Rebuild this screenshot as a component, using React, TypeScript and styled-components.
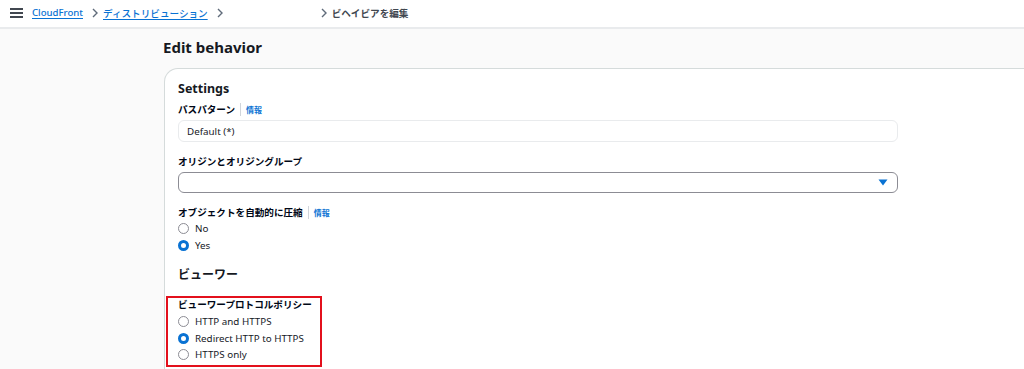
import React from 'react'
import styled, { createGlobalStyle } from 'styled-components'

const GlobalStyle = createGlobalStyle`
  body {
    margin: 0;
    background: #fafafa;
    font-family: 'Noto Sans', 'Noto Sans CJK JP', sans-serif;
    color: #16191f;
    overflow: hidden;
  }
`

const Chevron = () => (
  <ChevronIcon width='8' height='10' viewBox='0 0 8 10'>
    <path d='M2 1 L6 5 L2 9' fill='none' stroke='#5f6b7a' strokeWidth='1.4' />
  </ChevronIcon>
)

interface RadioProps {
  label: string
  checked?: boolean
}

const Radio = ({ label, checked }: RadioProps) => (
  <RadioRow>
    <RadioCircle checked={checked} />
    <RadioLabel>{label}</RadioLabel>
  </RadioRow>
)

const App = () => {
  return (
    <>
      <GlobalStyle />
      <TopBar>
        <Hamburger width='13' height='10' viewBox='0 0 13 10'>
          <path d='M0 1 H13 M0 5 H13 M0 9 H13' stroke='#414750' strokeWidth='1.8' />
        </Hamburger>
        <Crumbs>
          <CrumbLink>CloudFront</CrumbLink>
          <Chevron />
          <CrumbLink>ディストリビューション</CrumbLink>
          <Chevron />
          <CrumbGap />
          <Chevron />
          <CrumbCurrent>ビヘイビアを編集</CrumbCurrent>
        </Crumbs>
      </TopBar>
      <Main>
        <PageTitle>Edit behavior</PageTitle>
        <Card>
          <CardTitle>Settings</CardTitle>
          <Field>
            <LabelRow>
              <Label>パスパターン</Label>
              <Divider />
              <InfoLink>情報</InfoLink>
            </LabelRow>
            <TextBox>Default (*)</TextBox>
          </Field>
          <Field>
            <LabelRow>
              <Label>オリジンとオリジングループ</Label>
            </LabelRow>
            <SelectBox>
              <svg width='10' height='7' viewBox='0 0 10 7'>
                <path d='M0.5 0.5 H9.5 L5 6.5 Z' fill='#0972d3' />
              </svg>
            </SelectBox>
          </Field>
          <Field>
            <LabelRow>
              <Label>オブジェクトを自動的に圧縮</Label>
              <Divider />
              <InfoLink>情報</InfoLink>
            </LabelRow>
            <RadioGroup>
              <Radio label='No' />
              <Radio label='Yes' checked />
            </RadioGroup>
          </Field>
          <SubTitle>ビューワー</SubTitle>
          <Highlight>
            <LabelRow>
              <Label>ビューワープロトコルポリシー</Label>
            </LabelRow>
            <RadioGroup>
              <Radio label='HTTP and HTTPS' />
              <Radio label='Redirect HTTP to HTTPS' checked />
              <Radio label='HTTPS only' />
            </RadioGroup>
          </Highlight>
        </Card>
      </Main>
    </>
  )
}

const TopBar = styled.div`
  height: 29px;
  box-sizing: border-box;
  background: #ffffff;
  border-bottom: 2px solid #e9ebed;
  display: flex;
  align-items: center;
  padding-left: 10px;
`

const Hamburger = styled.svg`
  margin-right: 9px;
  margin-top: -2px;
`

const Crumbs = styled.div`
  display: flex;
  align-items: center;
  font-size: 9.6px;
  margin-top: -2px;
  white-space: nowrap;
`

const CrumbLink = styled.span`
  color: #0972d3;
  text-decoration: underline;
  text-underline-offset: 2px;
  font-weight: 500;
`

const CrumbGap = styled.span`
  width: 84px;
`

const CrumbCurrent = styled.span`
  color: #414750;
  font-weight: 700;
`

const ChevronIcon = styled.svg`
  margin: 0 4px 0 8px;
`

const Main = styled.div`
  padding-left: 164px;
`

const PageTitle = styled.h1`
  margin: 0 0 0 -1px;
  padding-top: 8px;
  height: 31px;
  font-size: 15px;
  font-weight: 700;
  line-height: 20px;
`

const Card = styled.div`
  background: #ffffff;
  border: 1px solid #d5dbdb;
  border-right: none;
  border-bottom: none;
  border-top-left-radius: 14px;
  padding: 10px 0 0 13px;
  height: 301px;
  box-sizing: border-box;
`

const CardTitle = styled.h2`
  margin: 0 0 2px 0;
  font-size: 12.5px;
  font-weight: 700;
  line-height: 20px;
`

const SubTitle = styled.h3`
  margin: 13px 0 12px 0;
  font-size: 12px;
  font-weight: 700;
  line-height: 18px;
`

const Field = styled.div`
  margin-bottom: 11px;
`

const LabelRow = styled.div`
  display: flex;
  align-items: center;
  height: 16px;
  margin-bottom: 3px;
  white-space: nowrap;
`

const Label = styled.span`
  font-size: 9.6px;
  font-weight: 700;
  color: #000716;
`

const Divider = styled.span`
  width: 1px;
  height: 13px;
  background: #d1d5db;
  margin: 0 5px 0 5px;
`

const InfoLink = styled.span`
  font-size: 8px;
  font-weight: 700;
  color: #0972d3;
`

const TextBox = styled.div`
  width: 720px;
  height: 22px;
  box-sizing: border-box;
  border: 1px solid #e9ebed;
  border-radius: 6px;
  padding: 0 8px;
  display: flex;
  align-items: center;
  font-size: 9.8px;
  color: #16191f;
`

const SelectBox = styled.div`
  width: 720px;
  height: 21px;
  box-sizing: border-box;
  border: 1px solid #8c8c94;
  border-radius: 6px;
  padding: 0 9px;
  display: flex;
  align-items: center;
  justify-content: flex-end;
`

const RadioGroup = styled.div`
  display: flex;
  flex-direction: column;
  margin-top: -3px;
`

const RadioRow = styled.div`
  display: flex;
  align-items: center;
  height: 16.7px;
`

const RadioCircle = styled.span<{ checked?: boolean }>`
  width: 11px;
  height: 11px;
  box-sizing: border-box;
  border-radius: 50%;
  border: ${(props) => (props.checked ? '3.5px solid #0972d3' : '1px solid #8c8c94')};
  background: #ffffff;
  margin-right: 6px;
`

const RadioLabel = styled.span`
  font-size: 9.8px;
  color: #16191f;
`

const Highlight = styled.div`
  margin-left: -12px;
  width: 156px;
  box-sizing: border-box;
  border: 2px solid #e3101c;
  padding: 0 0 2px 10px;

  & ${LabelRow} {
    height: 11px;
    margin-bottom: 4px;
  }

  & ${RadioGroup} {
    margin-top: 0;
  }

  & ${RadioRow} {
    height: 16.5px;
  }
`

export default App
